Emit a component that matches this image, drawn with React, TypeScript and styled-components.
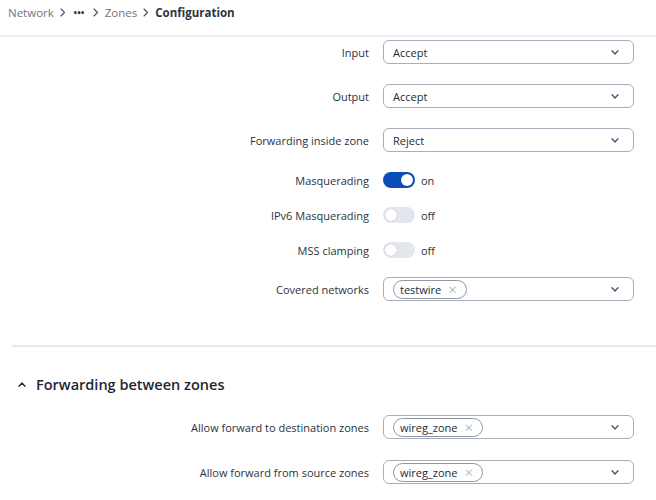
import React from "react";
import styled, { createGlobalStyle } from "styled-components";

const Global = createGlobalStyle`
  html, body { margin: 0; padding: 0; background: #ffffff; }
  body {
    font-family: "Open Sans", "Noto Sans", "Liberation Sans", sans-serif;
    font-size: 11px;
    color: #2b3240;
    -webkit-font-smoothing: antialiased;
  }
`;

const Page = styled.div`
  width: 656px;
  min-height: 500px;
  overflow: hidden;
`;

const Header = styled.header`
  display: flex;
  align-items: center;
  box-sizing: border-box;
  height: 37px;
  padding: 0 8px 11px;
  border-bottom: 2px solid #eceef3;
`;

const Crumbs = styled.nav`
  display: flex;
  align-items: center;
  gap: 6px;
  font-size: 11.5px;
`;

const Crumb = styled.span<{ $current?: boolean }>`
  color: ${(p) => (p.$current ? "#2d3442" : "#6d7583")};
  font-weight: ${(p) => (p.$current ? 700 : 400)};
`;

const Dots = styled.span`
  color: #2d3442;
  font-weight: 800;
  letter-spacing: 0.5px;
  font-size: 8px;
  padding: 0 2px;
`;

const Form = styled.div`
  display: flex;
  flex-direction: column;
  gap: 20px;
  padding: 3px 22px 0 0;
`;

const Row = styled.div<{ $h: number }>`
  display: grid;
  grid-template-columns: 1fr 251px;
  column-gap: 14px;
  align-items: center;
  height: ${(p) => p.$h}px;
`;

const Label = styled.label`
  text-align: right;
  font-size: 11px;
  color: #2b3240;
  white-space: nowrap;
`;

const SelectBox = styled.div`
  height: 24px;
  box-sizing: border-box;
  border: 1px solid #a6adbb;
  border-radius: 6px;
  display: flex;
  align-items: center;
  padding: 0 14px 0 9px;
  font-size: 11px;
  color: #232a36;
  background: #fff;
`;

const Value = styled.span`
  flex: 1;
`;

const Tag = styled.span`
  display: inline-flex;
  align-items: center;
  gap: 7px;
  height: 19px;
  box-sizing: border-box;
  border: 1px solid #8f97a6;
  border-radius: 10px;
  padding: 0 9px 0 6px;
  font-size: 11px;
  color: #232a36;
`;

const Cross = styled.span`
  color: #9aa1ad;
  font-size: 15px;
  font-weight: 300;
  line-height: 1;
`;

const Spacer = styled.span`
  flex: 1;
`;

const SwitchWrap = styled.div`
  display: flex;
  align-items: center;
  gap: 6px;
  font-size: 11px;
  color: #2b3240;
`;

const Track = styled.span<{ $on: boolean }>`
  position: relative;
  width: 32px;
  height: 16px;
  border-radius: 8px;
  background: ${(p) => (p.$on ? "#0b4db8" : "#e3e6ec")};
  display: inline-block;
`;

const Knob = styled.span<{ $on: boolean }>`
  position: absolute;
  top: 2px;
  left: ${(p) => (p.$on ? "18px" : "2px")};
  width: 12px;
  height: 12px;
  border-radius: 50%;
  background: #fff;
  box-shadow: 0 0 1px rgba(0, 0, 0, 0.35);
`;

const Divider = styled.hr`
  margin: 44px 0 0 12px;
  border: none;
  border-top: 2px solid #e3e8f1;
`;

const SectionTitle = styled.h2`
  display: flex;
  align-items: center;
  gap: 10px;
  margin: 28px 0 0 18px;
  font-size: 14.5px;
  font-weight: 600;
  color: #1f2633;
`;

const SectionForm = styled(Form)`
  padding-top: 21px;
  gap: 21px;
`;

const Chevron = ({ up }: { up?: boolean }) => (
  <svg width="8" height="5" viewBox="0 0 8 5" fill="none">
    <path
      d={up ? "M1 4.2 L4 1 L7 4.2" : "M1 0.8 L4 4 L7 0.8"}
      stroke={up ? "#1f2633" : "#4a5260"}
      strokeWidth="1.3"
      strokeLinecap="round"
      strokeLinejoin="round"
    />
  </svg>
);

const CrumbArrow = () => (
  <svg width="6" height="9" viewBox="0 0 6 9" fill="none">
    <path d="M1 1 L4.5 4.5 L1 8" stroke="#4a5260" strokeWidth="1.1" strokeLinecap="round" strokeLinejoin="round" />
  </svg>
);

const Select = ({ value }: { value: string }) => (
  <SelectBox>
    <Value>{value}</Value>
    <Chevron />
  </SelectBox>
);

const MultiSelect = ({ tags }: { tags: string[] }) => (
  <SelectBox>
    {tags.map((t) => (
      <Tag key={t}>
        {t}
        <Cross>×</Cross>
      </Tag>
    ))}
    <Spacer />
    <Chevron />
  </SelectBox>
);

const Switch = ({ on }: { on: boolean }) => (
  <SwitchWrap>
    <Track $on={on}>
      <Knob $on={on} />
    </Track>
    {on ? "on" : "off"}
  </SwitchWrap>
);

export default function App() {
  return (
    <Page>
      <Global />
      <Header>
        <Crumbs>
          <Crumb>Network</Crumb>
          <CrumbArrow />
          <Dots>•••</Dots>
          <CrumbArrow />
          <Crumb>Zones</Crumb>
          <CrumbArrow />
          <Crumb $current>Configuration</Crumb>
        </Crumbs>
      </Header>

      <Form>
        <Row $h={24}>
          <Label>Input</Label>
          <Select value="Accept" />
        </Row>
        <Row $h={24}>
          <Label>Output</Label>
          <Select value="Accept" />
        </Row>
        <Row $h={24}>
          <Label>Forwarding inside zone</Label>
          <Select value="Reject" />
        </Row>
        <Row $h={15}>
          <Label>Masquerading</Label>
          <Switch on />
        </Row>
        <Row $h={15}>
          <Label>IPv6 Masquerading</Label>
          <Switch on={false} />
        </Row>
        <Row $h={15}>
          <Label>MSS clamping</Label>
          <Switch on={false} />
        </Row>
        <Row $h={24}>
          <Label>Covered networks</Label>
          <MultiSelect tags={["testwire"]} />
        </Row>
      </Form>

      <Divider />

      <SectionTitle>
        <Chevron up />
        Forwarding between zones
      </SectionTitle>

      <SectionForm>
        <Row $h={24}>
          <Label>Allow forward to destination zones</Label>
          <MultiSelect tags={["wireg_zone"]} />
        </Row>
        <Row $h={24}>
          <Label>Allow forward from source zones</Label>
          <MultiSelect tags={["wireg_zone"]} />
        </Row>
      </SectionForm>
    </Page>
  );
}
